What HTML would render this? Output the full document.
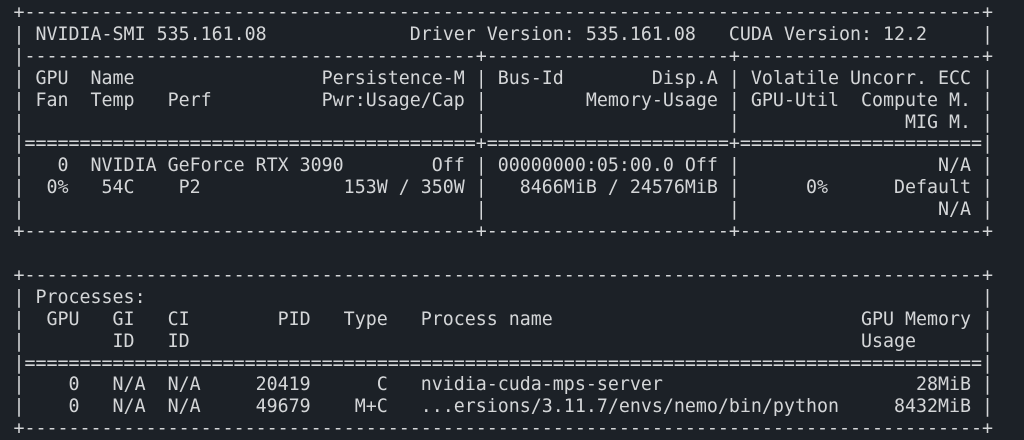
<!DOCTYPE html>
<html><head><meta charset="utf-8"><style>
html,body{margin:0;padding:0;background:#1c2127;width:1024px;height:440px;overflow:hidden}
pre{margin:0;position:absolute;left:13.5px;top:2px;font-family:"DejaVu Sans Mono","Liberation Mono",monospace;font-size:18.3px;line-height:21.9px;color:#d4d6d8;white-space:pre}
</style></head><body><pre>+---------------------------------------------------------------------------------------+
| NVIDIA-SMI 535.161.08             Driver Version: 535.161.08   CUDA Version: 12.2     |
|-----------------------------------------+----------------------+----------------------+
| GPU  Name                 Persistence-M | Bus-Id        Disp.A | Volatile Uncorr. ECC |
| Fan  Temp   Perf          Pwr:Usage/Cap |         Memory-Usage | GPU-Util  Compute M. |
|                                         |                      |               MIG M. |
|=========================================+======================+======================|
|   0  NVIDIA GeForce RTX 3090        Off | 00000000:05:00.0 Off |                  N/A |
|  0%   54C    P2             153W / 350W |   8466MiB / 24576MiB |      0%      Default |
|                                         |                      |                  N/A |
+-----------------------------------------+----------------------+----------------------+

+---------------------------------------------------------------------------------------+
| Processes:                                                                            |
|  GPU   GI   CI        PID   Type   Process name                            GPU Memory |
|        ID   ID                                                             Usage      |
|=======================================================================================|
|    0   N/A  N/A     20419      C   nvidia-cuda-mps-server                       28MiB |
|    0   N/A  N/A     49679    M+C   ...ersions/3.11.7/envs/nemo/bin/python     8432MiB |
+---------------------------------------------------------------------------------------+</pre></body></html>
